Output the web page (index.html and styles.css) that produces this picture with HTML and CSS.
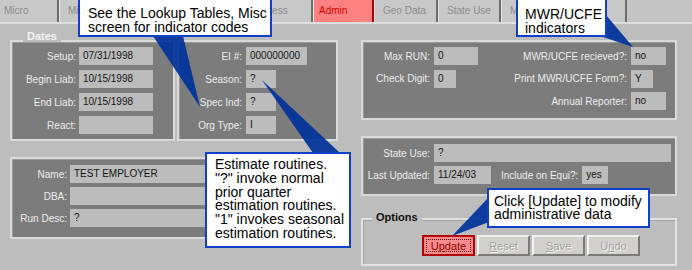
FILE: index.html
```html
<!DOCTYPE html>
<html lang="en">
<head>
    <meta charset="UTF-8">
    <title>Employer - Admin</title>
    <link rel="stylesheet" href="styles.css">
</head>
<body>
    <div class="tabs">
        <div class="tab tab-micro">Micro</div>
        <div class="tab tab-misc">Misc</div>
        <div class="tab tab-contact">Contact</div>
        <div class="tab tab-address">Address</div>
        <div class="tab tab-admin">Admin</div>
        <div class="tab tab-geo">Geo Data</div>
        <div class="tab tab-state">State Use</div>
        <div class="tab tab-last">MWR/UCFE QA</div>
    </div>

    <div class="main">
        <!-- left column -->
        <div class="col-left">
            <div class="dates">
                <div class="box box-dates">
                    <div class="legend legend-light">Dates</div>
                    <div class="row"><span class="lbl w64">Setup:</span><span class="fld w74">07/31/1998</span></div>
                    <div class="row"><span class="lbl w64">Begin Liab:</span><span class="fld w74">10/15/1998</span></div>
                    <div class="row"><span class="lbl w64">End Liab:</span><span class="fld w74">10/15/1998</span></div>
                    <div class="row"><span class="lbl w64">React:</span><span class="fld w74"></span></div>
                </div>
                <div class="box box-ids">
                    <div class="row"><span class="lbl w63">EI #:</span><span class="fld w61">000000000</span></div>
                    <div class="row"><span class="lbl w63">Season:</span><span class="fld w30">?</span></div>
                    <div class="row"><span class="lbl w63">Spec Ind:</span><span class="fld w30">?</span></div>
                    <div class="row"><span class="lbl w63">Org Type:</span><span class="fld w30">I</span></div>
                </div>
            </div>

            <div class="box box-name">
                <div class="row"><span class="lbl w55">Name:</span><span class="fld w260">TEST EMPLOYER</span></div>
                <div class="row"><span class="lbl w55">DBA:</span><span class="fld w260"></span></div>
                <div class="row"><span class="lbl w55">Run Desc:</span><span class="fld w260">?</span></div>
            </div>
        </div>

        <!-- right column -->
        <div class="col-right">
            <div class="box box-mwr">
                <span class="lbl">Max RUN:</span><span class="fld w44">0</span>
                <span class="lbl">MWR/UCFE recieved?:</span><span class="fld w35">no</span>
                <span class="lbl">Check Digit:</span><span class="fld w22">0</span>
                <span class="lbl">Print MWR/UCFE Form?:</span><span class="fld w22">Y</span>
                <span></span><span></span>
                <span class="lbl">Annual Reporter:</span><span class="fld w35">no</span>
            </div>

            <div class="box box-state">
                <div class="row"><span class="lbl w67">State Use:</span><span class="fld w237">?</span></div>
                <div class="row">
                    <span class="lbl w67">Last Updated:</span><span class="fld w57">11/24/03</span>
                    <span class="lbl gap-left">Include on Equi?:</span><span class="fld w26">yes</span>
                </div>
            </div>

            <div class="options">
                <div class="legend legend-dark">Options</div>
                <div class="buttons">
                    <button class="btn btn-update">U<u>p</u>date</button>
                    <button class="btn"><u>R</u>eset</button>
                    <button class="btn"><u>S</u>ave</button>
                    <button class="btn">U<u>n</u>do</button>
                </div>
            </div>
        </div>
    </div>

    <!-- callout pointers -->
    <svg class="pointers" width="692" height="270" viewBox="0 0 692 270">
        <polygon points="153,36 183,36 200,107" />
        <polygon points="262,80 313,153 340,153" />
        <polygon points="606,15 600,36 633,47" />
        <polygon points="489,197 489,222 452,236" />
    </svg>

    <div class="callout callout-lookup">See the Lookup Tables, Misc<br>screen for indicator codes</div>
    <div class="callout callout-mwr">MWR/UCFE<br>indicators</div>
    <div class="callout callout-estimate">Estimate routines.<br>"?" invoke normal<br>prior quarter<br>estimation routines.<br>"1" invokes seasonal<br>estimation routines.</div>
    <div class="callout callout-update">Click [Update] to modify<br>administrative data</div>
</body>
</html>
```

FILE: styles.css
```css
body {
    margin: 0;
    width: 692px;
    height: 270px;
    overflow: hidden;
    position: relative;
    background-color: #bdbdbd;
    font-family: 'Liberation Sans', Arial, sans-serif;
    font-size: 10px;
}

/* tab strip */
.tabs {
    display: flex;
    height: 22px;
    border-bottom: 2px solid #dedede;
    background-color: #c4c4c4;
}

.tab {
    box-sizing: border-box;
    height: 22px;
    line-height: 22px;
    padding-left: 8px;
    color: #8c8c8c;
    background-color: #c8c8c8;
    border-left: 1px solid #e6e6e6;
    border-right: 2px solid #6c6c6c;
}

.tab-micro { width: 59px; padding-left: 4px; border-left: none; }
.tab-misc { width: 85px; }
.tab-contact { width: 86px; }
.tab-address { width: 83px; padding-left: 20px; }
.tab-admin {
    width: 61px;
    padding-left: 5px;
    background-color: #ff8282;
    color: #d40000;
    border-right-color: #b00000;
}
.tab-geo { width: 64px; }
.tab-state { width: 63px; }
.tab-last { width: 126px; }

/* layout */
.main {
    display: flex;
    gap: 23px;
    padding: 16px 0 0 10px;
}

.col-left {
    width: 328px;
}

.col-right {
    width: 316px;
}

.box {
    box-sizing: border-box;
    background-color: #7c7c7c;
    border: 2px solid #dadada;
    box-shadow: inset 1px 1px 0 #9a9a9a;
}

.row {
    display: flex;
    align-items: center;
    gap: 3px;
    height: 18px;
    margin-bottom: 5px;
}

.row:last-child {
    margin-bottom: 0;
}

.lbl {
    text-align: right;
    color: #ececec;
    white-space: nowrap;
}

.fld {
    box-sizing: border-box;
    height: 18px;
    line-height: 18px;
    padding-left: 4px;
    background-color: #bcbcbc;
    color: #151515;
    white-space: nowrap;
    overflow: hidden;
}

.w55 { width: 55px; }
.w63 { width: 63px; }
.w64 { width: 64px; }
.w67 { width: 67px; }
.w22 { width: 22px; }
.w26 { width: 26px; }
.w30 { width: 30px; }
.w35 { width: 35px; }
.w44 { width: 44px; }
.w57 { width: 57px; }
.w61 { width: 61px; }
.w74 { width: 74px; }
.w237 { width: 237px; }
.w260 { width: 260px; }

.legend {
    width: fit-content;
    height: 11px;
    line-height: 11px;
    padding: 0 4px;
    background-color: #bdbdbd;
    font-size: 11px;
    font-weight: bold;
}

.legend-light {
    color: #f4f4f4;
    margin: -16px 0 5px 11px;
}

.legend-dark {
    color: #111;
    margin: -8px 0 0 9px;
}

/* dates group */
.dates {
    display: flex;
    gap: 2px;
}

.dates .box {
    height: 101px;
    padding-top: 5px;
}

.box-dates {
    width: 165px;
}

.box-dates .row {
    gap: 3px;
}

.box-ids {
    width: 161px;
}

.box-ids .row {
    gap: 4px;
}

.box-name {
    margin-top: 16px;
    height: 82px;
    padding-top: 6px;
}

.box-name .row {
    margin-bottom: 4px;
}

.box-name .row:last-child {
    margin-bottom: 0;
}

/* right column */
.box-mwr {
    height: 80px;
    padding-top: 5px;
    display: grid;
    grid-template-columns: 67px 50px 139px auto;
    grid-auto-rows: 18px;
    column-gap: 4px;
    row-gap: 4.5px;
    align-items: center;
}

.box-mwr .fld {
    justify-self: start;
}

.box-state {
    margin-top: 16px;
    height: 60px;
    padding-top: 6px;
}

.box-state .row {
    gap: 4px;
    margin-bottom: 4px;
}

.box-state .row:last-child {
    margin-bottom: 0;
}

.gap-left {
    margin-left: 6px;
}

.options {
    box-sizing: border-box;
    margin-top: 22px;
    height: 48px;
    border: 2px solid #e2e2e2;
    box-shadow: inset 1px 1px 0 #a4a4a4;
}

.buttons {
    display: flex;
    gap: 2px;
    padding: 12px 0 0 59px;
}

.btn {
    box-sizing: border-box;
    width: 53px;
    height: 21px;
    padding: 0;
    font-family: 'Liberation Sans', Arial, sans-serif;
    font-size: 11px;
    color: #a2a2a2;
    text-shadow: 1px 1px 0 #f4f4f4;
    background-color: #d2d0cc;
    border: 2px solid;
    border-color: #f2f2f2 #7a7a7a #7a7a7a #f2f2f2;
}

.btn-update {
    color: #8c0000;
    text-shadow: none;
    background-color: #ff8c8c;
    border: 2px solid #b40000;
    outline: 1px dotted #600000;
    outline-offset: -5px;
}

/* callouts */
.pointers {
    position: absolute;
    left: 0;
    top: 0;
    pointer-events: none;
}

.pointers polygon {
    fill: #00329a;
    opacity: 0.92;
}

.callout {
    position: absolute;
    box-sizing: border-box;
    background-color: #ffffff;
    border: 2px solid #1040c8;
    color: #000;
    font-family: 'Liberation Sans', Arial, sans-serif;
    font-size: 14px;
    line-height: 14px;
    white-space: nowrap;
}

.callout-lookup {
    left: 78px;
    top: -2px;
    width: 194px;
    height: 39px;
    padding: 6px 0 0 8px;
}

.callout-mwr {
    left: 516px;
    top: -2px;
    width: 91px;
    height: 39px;
    padding: 7px 0 0 7px;
}

.callout-estimate {
    left: 205px;
    top: 152px;
    width: 146px;
    height: 96px;
    padding: 4px 0 0 8px;
    line-height: 13.8px;
}

.callout-update {
    left: 487px;
    top: 188px;
    width: 163px;
    height: 40px;
    padding: 5px 0 0 5px;
    line-height: 13px;
}
```
